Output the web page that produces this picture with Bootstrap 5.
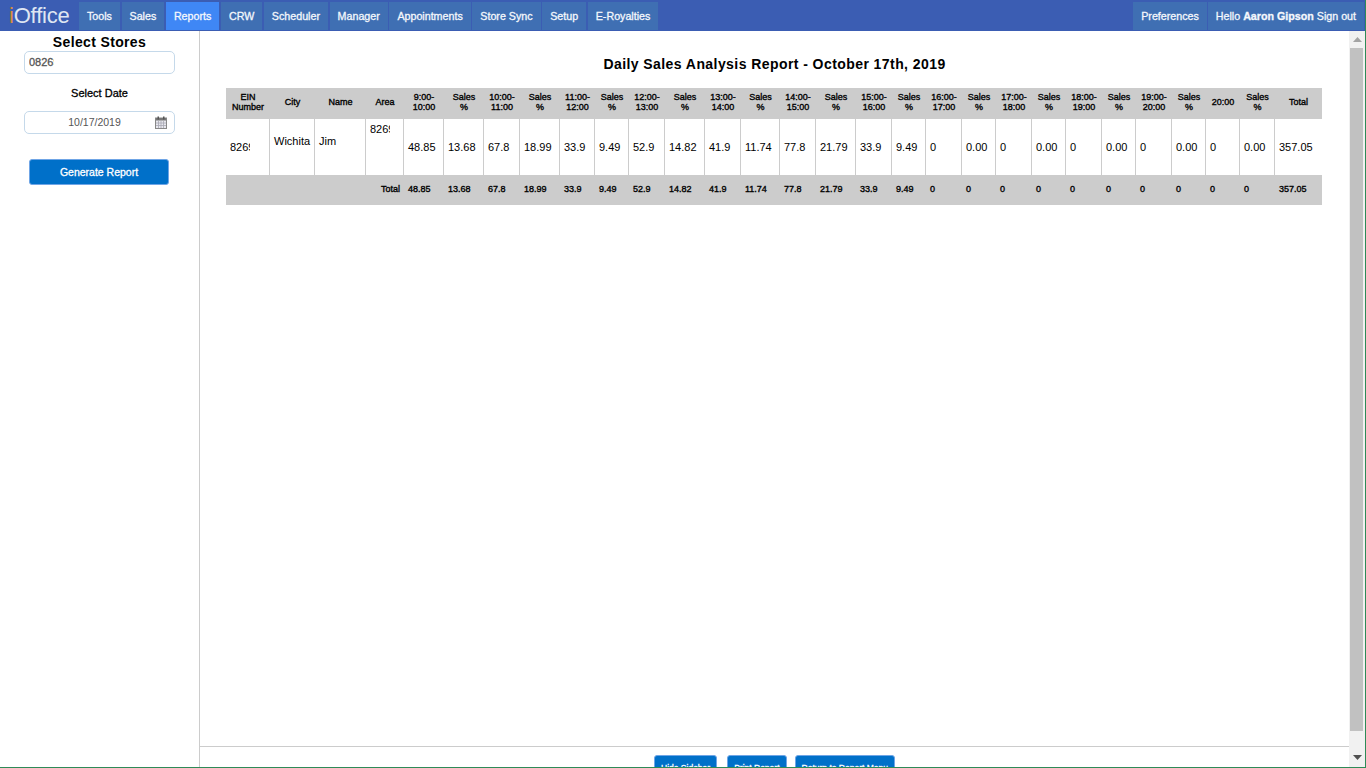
<!DOCTYPE html>
<html lang="en">
<head>
  <meta charset="UTF-8" />
  <title>iOffice - Daily Sales Analysis Report</title>
  <link href="https://cdn.jsdelivr.net/npm/bootstrap@5.3.3/dist/css/bootstrap.min.css" rel="stylesheet" />
  <style>
    body { font-family: "Liberation Sans", Arial, sans-serif; font-size: 11px; color: #000; }
    .app-frame { border-right: 1px solid #2e8b57; border-bottom: 1px solid #2e8b57; }
    .top-bar { height: 31px; background: #3b5db3; flex-wrap: nowrap; }
    .brand-logo { width: 79px; padding-left: 9px; font-size: 22px; line-height: 31px; color: #dfe6f2; letter-spacing: -.2px; }
    .brand-logo span { color: #d98f3c; }
    .top-link { display: block; height: 28px; margin: 2px 1.6px 0 0; padding: 0 8px; line-height: 28px; font-size: 10.7px; color: #f4f7fc; background: #3f6fb3; text-decoration: none; white-space: nowrap; -webkit-text-stroke: .3px; }
    .top-link.is-active { background: #3f87f5; }
    .top-link.is-last { margin-right: 1px; }
    .side-panel { width: 200px; border-right: 1px solid #ccc; flex: none; }
    .side-title { font-size: 14px; line-height: 16px; margin-top: 3px; letter-spacing: .35px; }
    .side-field { width: 151px; height: 23px; margin-left: 24px; margin-top: 1px; border: 1px solid #c5d9ea; border-radius: 5px; font-size: 10.5px; color: #555; padding: 0 4px; }
    .clip-text { display: inline-block; overflow: hidden; white-space: nowrap; vertical-align: bottom; }
    .clip-store { width: 25.2px; font-size: 11px; -webkit-text-stroke: .3px; }
    .side-label { font-size: 11px; line-height: 13px; margin-top: 13px; margin-bottom: 11px; -webkit-text-stroke: .3px; }
    .gen-btn { width: 140px; height: 26px; margin: 25px 0 0 29px; padding-top: 1px; padding-bottom: 0; }
    .blue-btn { background: #0070c9; border: 1px solid #6fa5e6; border-radius: 3px; color: #fff; font-size: 10.5px; padding-left: 6px; padding-right: 6px; -webkit-text-stroke: .3px; }
    .blue-btn:hover { background: #0070c9; color: #fff; border-color: #6fa5e6; }
    .report-title { font-size: 14px; line-height: 16px; margin: 25px 0 16px; letter-spacing: .43px; }
    .report-wrap { padding: 0 27px 0 26px; }
    .report-table { width: 1096px; table-layout: fixed; border-collapse: separate; border-spacing: 0; }
    .report-table th, .report-table td { padding: 0 4px; overflow: hidden; }
    .report-table thead th { height: 31px; background: #ccc; font-size: 9px; font-weight: 400; line-height: 10px; text-align: center; vertical-align: middle; padding: 0 2px 3px; -webkit-text-stroke: .35px; }
    .report-table tbody td { height: 56px; border-right: 1px solid #ccc; vertical-align: middle; }
    .report-table tbody td:last-child { border-right: 0; }
    .report-table tfoot td { height: 30px; background: #ccc; font-size: 9px; vertical-align: middle; -webkit-text-stroke: .35px; }
    .cell-raised { padding-bottom: 12px !important; }
    .cell-top { vertical-align: top !important; padding-top: 2px !important; }
    .clip-id { width: 19.5px; }
    .foot-bar { height: 21px; flex: none; border-top: 1px solid #ccc; padding-top: 8px; }
    .foot-btn { height: 26px; flex: none; font-size: 8.5px; padding-top: 0; padding-bottom: 0; }
    .foot-gap { margin-right: 2px; }
    .fake-scroll { width: 16px; flex: none; background: #f1f1f1; }
    .scroll-end { height: 17px; flex: none; }
    .scroll-thumb { height: 683px; margin: 0 2px 0 1px; background: #c1c1c1; }
    .cal-icon { width: 12px; height: 13px; flex: none; }
    .date-text { width: 126px; padding-left: 5px; flex: none; }
  </style>
</head>
<body class="overflow-hidden">
<div class="app-frame d-flex flex-column vh-100">

  <nav class="top-bar d-flex flex-shrink-0">
    <div class="brand-logo flex-shrink-0"><span>i</span>Office</div>
    <a class="top-link" href="#">Tools</a>
    <a class="top-link" href="#">Sales</a>
    <a class="top-link is-active" href="#">Reports</a>
    <a class="top-link" href="#">CRW</a>
    <a class="top-link" href="#">Scheduler</a>
    <a class="top-link" href="#">Manager</a>
    <a class="top-link" href="#">Appointments</a>
    <a class="top-link" href="#">Store Sync</a>
    <a class="top-link" href="#">Setup</a>
    <a class="top-link" href="#">E-Royalties</a>
    <a class="top-link is-last ms-auto" href="#">Preferences</a>
    <a class="top-link is-last" href="#">Hello <b>Aaron Gipson</b> Sign out</a>
  </nav>

  <div class="d-flex flex-grow-1 overflow-hidden">
    <aside class="side-panel">
      <div class="side-title fw-bold text-center">Select Stores</div>
      <div class="side-field d-flex align-items-center"><span class="clip-text clip-store">08269</span></div>
      <div class="side-label text-center">Select Date</div>
      <div class="side-field d-flex align-items-center">
        <span class="date-text text-center">10/17/2019</span>
        <svg class="cal-icon" viewBox="0 0 12 13">
          <rect x=".5" y="2" width="11" height="10.5" fill="#e8e8ee" stroke="#888"/>
          <rect x="1" y="2" width="10" height="2.5" fill="#777"/>
          <rect x="2.5" y=".5" width="1.5" height="3" fill="#555"/>
          <rect x="8" y=".5" width="1.5" height="3" fill="#555"/>
          <path d="M1 7h10M1 9.5h10M3.5 5v7M6 5v7M8.5 5v7" stroke="#a8a8b4" stroke-width=".8" fill="none"/>
        </svg>
      </div>
      <button type="button" class="btn blue-btn gen-btn d-block">Generate Report</button>
    </aside>

    <div class="d-flex flex-column flex-grow-1 overflow-hidden">
      <main class="flex-grow-1 overflow-hidden">
        <h1 class="report-title fw-bold text-center">Daily Sales Analysis Report - October 17th, 2019</h1>
        <div class="report-wrap">
          <table class="report-table">
            <colgroup>
              <col width="44"><col width="45"><col width="51"><col width="38"><col width="40"><col width="40"><col width="36"><col width="40"><col width="35"><col width="34">
              <col width="36"><col width="40"><col width="36"><col width="39"><col width="36"><col width="40"><col width="36"><col width="34"><col width="36"><col width="34">
              <col width="36"><col width="34"><col width="36"><col width="34"><col width="36"><col width="34"><col width="34"><col width="35"><col width="47">
            </colgroup>
            <thead>
              <tr>
                <th>EIN Number</th><th>City</th><th>Name</th><th>Area</th>
                <th>9:00-10:00</th><th>Sales<br>%</th><th>10:00-11:00</th><th>Sales<br>%</th>
                <th>11:00-12:00</th><th>Sales<br>%</th><th>12:00-13:00</th><th>Sales<br>%</th>
                <th>13:00-14:00</th><th>Sales<br>%</th><th>14:00-15:00</th><th>Sales<br>%</th>
                <th>15:00-16:00</th><th>Sales<br>%</th><th>16:00-17:00</th><th>Sales<br>%</th>
                <th>17:00-18:00</th><th>Sales<br>%</th><th>18:00-19:00</th><th>Sales<br>%</th>
                <th>19:00-20:00</th><th>Sales<br>%</th><th>20:00</th><th>Sales<br>%</th><th>Total</th>
              </tr>
            </thead>
            <tbody>
              <tr>
                <td><span class="clip-text clip-id">8269</span></td>
                <td class="cell-raised">Wichita</td>
                <td class="cell-raised">Jim</td>
                <td class="cell-top"><span class="clip-text clip-id">8269</span></td>
                <td>48.85</td><td>13.68</td><td>67.8</td><td>18.99</td><td>33.9</td><td>9.49</td>
                <td>52.9</td><td>14.82</td><td>41.9</td><td>11.74</td><td>77.8</td><td>21.79</td>
                <td>33.9</td><td>9.49</td><td>0</td><td>0.00</td><td>0</td><td>0.00</td>
                <td>0</td><td>0.00</td><td>0</td><td>0.00</td><td>0</td><td>0.00</td><td>357.05</td>
              </tr>
            </tbody>
            <tfoot>
              <tr>
                <td colspan="4" class="text-end">Total</td>
                <td>48.85</td><td>13.68</td><td>67.8</td><td>18.99</td><td>33.9</td><td>9.49</td>
                <td>52.9</td><td>14.82</td><td>41.9</td><td>11.74</td><td>77.8</td><td>21.79</td>
                <td>33.9</td><td>9.49</td><td>0</td><td>0</td><td>0</td><td>0</td>
                <td>0</td><td>0</td><td>0</td><td>0</td><td>0</td><td>0</td><td>357.05</td>
              </tr>
            </tfoot>
          </table>
        </div>
      </main>
      <div class="foot-bar d-flex justify-content-center gap-2 overflow-hidden">
        <button type="button" class="btn blue-btn foot-btn foot-gap">Hide Sidebar</button>
        <button type="button" class="btn blue-btn foot-btn">Print Report</button>
        <button type="button" class="btn blue-btn foot-btn">Return to Report Menu</button>
      </div>
    </div>

    <div class="fake-scroll d-flex flex-column">
      <div class="scroll-end d-flex align-items-center justify-content-center">
        <svg width="9" height="5" viewBox="0 0 9 5"><path d="M4.5 0L9 5H0z" fill="#a3a3a3"/></svg>
      </div>
      <div class="scroll-thumb"></div>
      <div class="d-flex align-items-center justify-content-center flex-grow-1 pt-3">
        <svg width="9" height="5" viewBox="0 0 9 5"><path d="M0 0H9L4.5 5z" fill="#505050"/></svg>
      </div>
    </div>
  </div>
</div>
<script src="https://cdn.jsdelivr.net/npm/bootstrap@5.3.3/dist/js/bootstrap.bundle.min.js"></script>
</body>
</html>
